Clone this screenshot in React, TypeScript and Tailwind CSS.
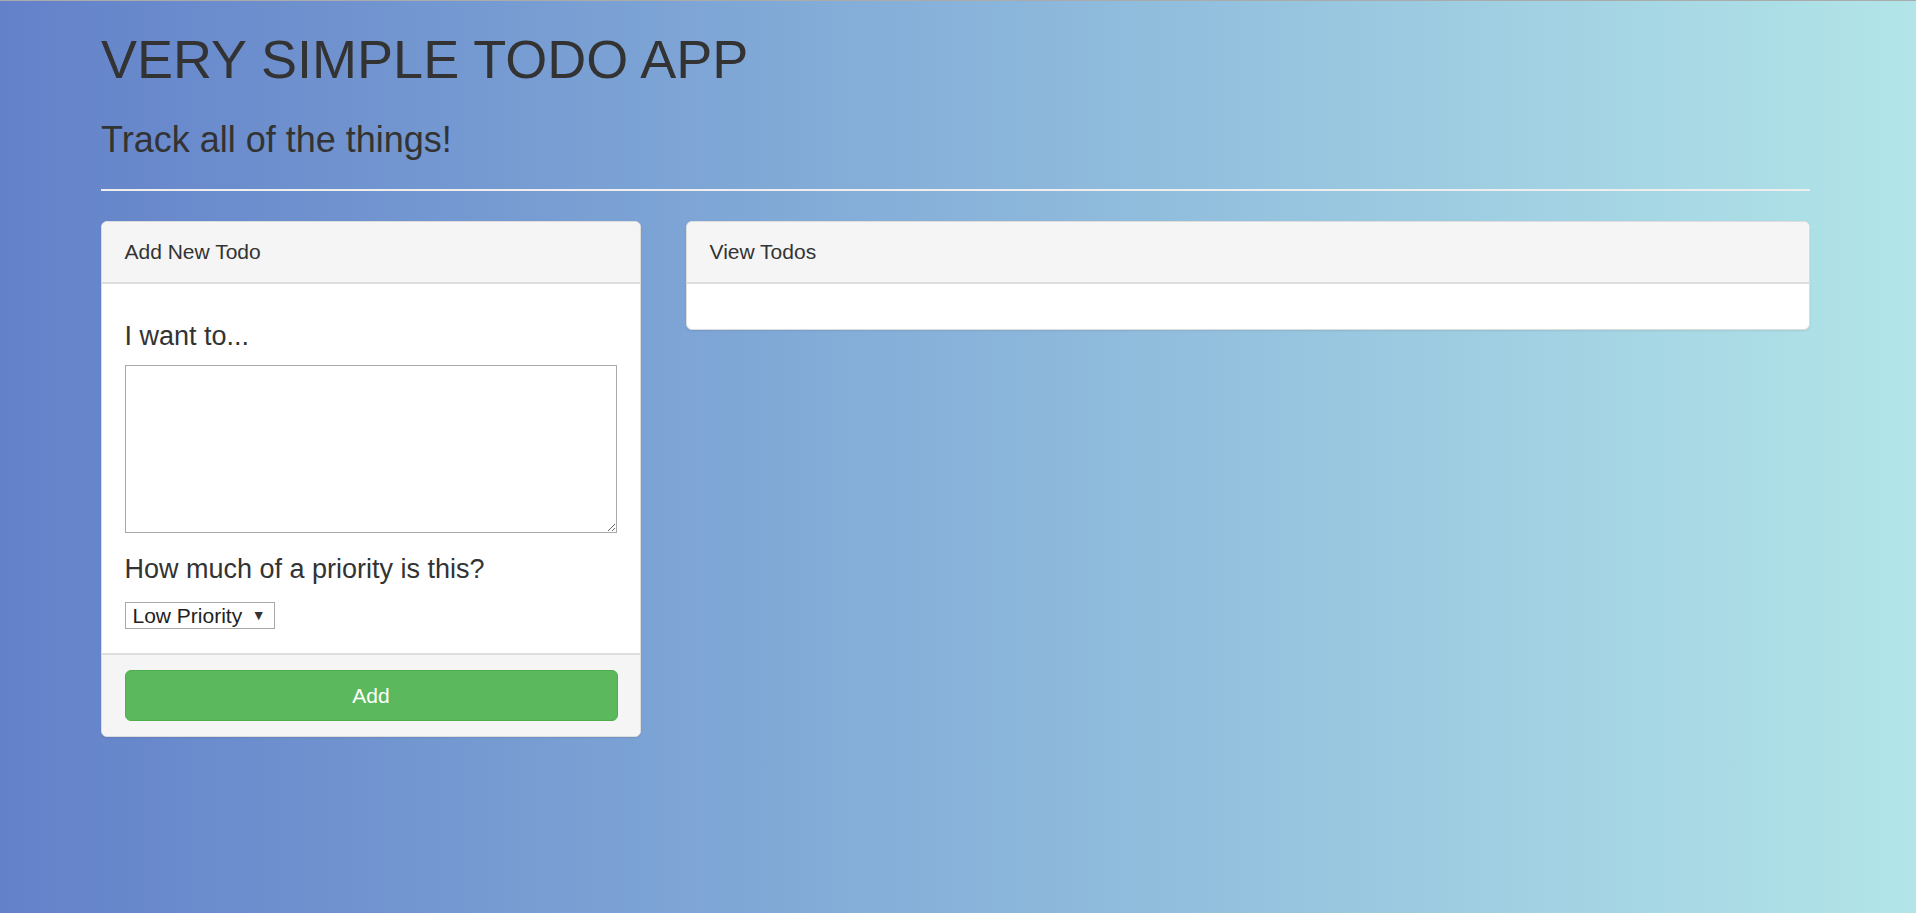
import { useState } from 'react';

export default function App() {
  const [text, setText] = useState('');
  const [priority, setPriority] = useState('1');

  return (
    <div className="min-h-screen w-full border-t border-[#ababab] bg-linear-to-r from-[#6381c9] to-[#b2e5e8] text-[#333333] font-['Liberation_Sans',Arial,sans-serif]">
      <div className="ml-[101px] w-[1709px] pb-10">
        {/* Header */}
        <h1 className="pt-[29px] text-[54px] leading-[59.4px]">VERY SIMPLE TODO APP</h1>
        <h3 className="mt-[31px] text-[36px] leading-[39.6px]">Track all of the things!</h3>
        <hr className="mt-[29px] border-0 border-t-2 border-[#eeeeee]" />

        <div className="mt-[30px] flex items-start gap-[45px]">
          {/* Add form */}
          <div className="w-[540px] shrink-0 overflow-hidden rounded-[6px] border border-[#dddddd] bg-white shadow-[0_1px_2px_rgba(0,0,0,0.08)]">
            <div className="border-b-2 border-[#dddddd] bg-[#f5f5f5] px-[22.5px] py-[15px] text-[21px] leading-[30px]">
              Add New Todo
            </div>
            <div className="pl-[22.5px] pr-[23.5px] pt-[22.5px] pb-[24px]">
              <h4 className="mt-[15px] mb-[14px] text-[27px] leading-[29.7px]">I want to...</h4>
              <textarea
                value={text}
                onChange={(e) => setText(e.target.value)}
                className="block h-[168px] w-full border border-[#a9a9a9] bg-white"
              />
              <h4 className="mt-[22px] mb-[17px] text-[27px] leading-[29.7px]">How much of a priority is this?</h4>
              <div className="relative h-[27px] w-[150px]">
                <select
                  value={priority}
                  onChange={(e) => setPriority(e.target.value)}
                  className="h-full w-full appearance-none border border-[#a9a9a9] bg-white pl-[7px] text-[21px] leading-[25px] text-[#222222]"
                >
                  <option value="1">Low Priority</option>
                  <option value="2">Medium Priority</option>
                  <option value="3">High Priority</option>
                </select>
                <span className="pointer-events-none absolute right-[9px] top-[4px] text-[14px] leading-[19px] text-[#333333]">▼</span>
              </div>
            </div>
            <div className="border-t-2 border-[#dddddd] bg-[#f5f5f5] px-[22.5px] py-[15px]">
              <button className="block h-[51px] w-full rounded-[6px] border border-[#4cae4c] bg-[#5cb85c] text-[21px] text-white">
                Add
              </button>
            </div>
          </div>

          {/* Todo list */}
          <div className="flex-1 overflow-hidden rounded-[6px] border border-[#dddddd] bg-white shadow-[0_1px_2px_rgba(0,0,0,0.08)]">
            <div className="border-b-2 border-[#dddddd] bg-[#f5f5f5] px-[22.5px] py-[15px] text-[21px] leading-[30px]">
              View Todos
            </div>
            <div className="h-[45px]" />
          </div>
        </div>
      </div>
    </div>
  );
}
